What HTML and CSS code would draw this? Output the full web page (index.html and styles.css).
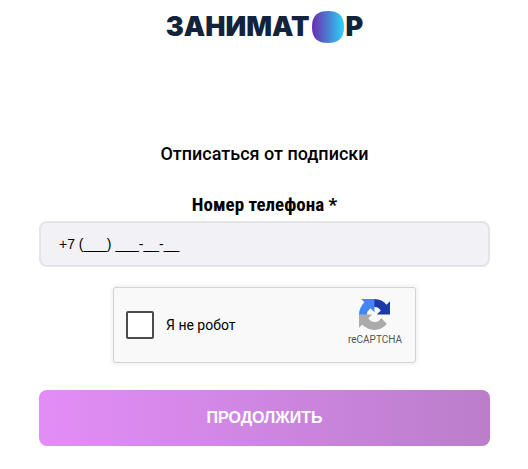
FILE: index.html
```
<!DOCTYPE html>
<html lang="ru">

<head>
  <meta charset="UTF-8">
  <meta name="viewport" content="width=device-width, initial-scale=1.0">
  <title>Заниматор</title>
  <link rel="stylesheet" href="styles.css">
</head>

<body>
  <header class="logo">
    <span>ЗАНИМАТ</span>
    <svg class="logo-o" viewBox="0 0 32 32" aria-hidden="true">
      <defs>
        <linearGradient id="logoFill">
          <stop offset="0" stop-color="#6a2cb0" />
          <stop offset="0.5" stop-color="#4b7fd2" />
          <stop offset="1" stop-color="#2cd5f8" />
        </linearGradient>
      </defs>
      <path d="M16 0C26 0 32 4 32 16S26 32 16 32S0 28 0 16S6 0 16 0Z" fill="url(#logoFill)" />
    </svg>
    <span>Р</span>
  </header>

  <main>
    <h1>Отписаться от подписки</h1>
    <form>
      <label class="phone-label" for="phone">Номер телефона *</label>
      <input class="phone" id="phone" type="tel" value="+7 (___) ___-__-__">

      <div class="captcha">
        <input class="captcha-check" id="robot" type="checkbox">
        <label class="captcha-label" for="robot">Я не робот</label>
        <div class="captcha-brand">
          <svg class="captcha-icon" viewBox="0 0 64 64" aria-hidden="true">
            <path fill="#1c3aa9" d="M64 31.955l-.033-1.37V4.687l-7.16 7.16C50.948 4.674 42.033.093 32.05.093c-10.4 0-19.622 4.96-25.458 12.64l11.736 11.86a15.55 15.55 0 0 1 4.754-5.334c2.05-1.6 4.952-2.906 8.968-2.906.485 0 .86.057 1.135.163 4.976.393 9.288 3.14 11.828 7.124l-8.307 8.307L64 31.953" />
            <path fill="#4285f4" d="M31.862.094l-1.37.033H4.594l7.16 7.16C4.58 13.147 0 22.06 0 32.046c0 10.4 4.96 19.622 12.64 25.458L24.5 45.768a15.55 15.55 0 0 1-5.334-4.754c-1.6-2.05-2.906-4.952-2.906-8.968 0-.485.057-.86.163-1.135.393-4.976 3.14-9.288 7.124-11.828l8.307 8.307L31.86.095" />
            <path fill="#ababab" d="M.001 32.045l.033 1.37v25.898l7.16-7.16c5.86 7.173 14.774 11.754 24.76 11.754 10.4 0 19.622-4.96 25.458-12.64l-11.736-11.86a15.55 15.55 0 0 1-4.754 5.334c-2.05 1.6-4.952 2.906-8.968 2.906-.485 0-.86-.057-1.135-.163-4.976-.393-9.288-3.14-11.828-7.124l8.307-8.307c-10.522.04-22.4.066-27.295-.005" />
          </svg>
          <span>reCAPTCHA</span>
        </div>
      </div>

      <button class="submit" type="submit">ПРОДОЛЖИТЬ</button>
    </form>
  </main>
</body>

</html>
```

FILE: styles.css
```
* {
  box-sizing: border-box;
}

body {
  margin: 0;
  padding: 11px 38px 0 39px;
  background: #fff;
  color: #000;
  font-family: Roboto, "Liberation Sans", sans-serif;
}

.logo {
  display: flex;
  justify-content: center;
  align-items: center;
  gap: 2px;
  color: #12233b;
  font: 900 27px/32px Inter, sans-serif;
}

.logo-o {
  width: 32px;
  height: 32px;
}

h1 {
  margin: 99px 0 0;
  font-size: 18px;
  font-weight: 500;
  line-height: 24px;
  text-align: center;
}

form {
  display: flex;
  flex-direction: column;
  align-items: center;
  margin-top: 27px;
}

.phone-label {
  font-family: "Roboto Condensed", Roboto, sans-serif;
  font-size: 19px;
  font-weight: 700;
  line-height: 24px;
}

.phone {
  width: 100%;
  height: 46px;
  margin-top: 4px;
  padding: 0 18px;
  border: 2px solid #e4e4e7;
  border-radius: 8px;
  background: #f2f1f6;
  color: #000;
  font: 14px "Liberation Sans", sans-serif;
}

.captcha {
  display: flex;
  align-items: center;
  width: 100%;
  max-width: 303px;
  height: 76px;
  margin-top: 20px;
  padding: 0 13px 0 12px;
  border: 1px solid #d3d3d3;
  border-radius: 3px;
  background: #f9f9f9;
  box-shadow: 0 0 4px 1px rgba(0, 0, 0, 0.08);
}

.captcha-check {
  appearance: none;
  width: 28px;
  height: 28px;
  margin: 0 12px 0 0;
  border: 2px solid #4c4a4b;
  border-radius: 2px;
  background: #fff;
}

.captcha-label {
  font-size: 14px;
}

.captcha-brand {
  display: flex;
  flex-direction: column;
  align-items: center;
  gap: 4px;
  margin-left: auto;
  padding-bottom: 6px;
  color: #555;
  font-size: 10px;
  line-height: 12px;
}

.captcha-icon {
  width: 31px;
  height: 31px;
}

.submit {
  width: 100%;
  height: 56px;
  margin-top: 27px;
  border: 0;
  border-radius: 8px;
  background: linear-gradient(90deg, #e28df7, #bb7ecb);
  color: #fff;
  font: 700 16px "Liberation Sans", sans-serif;
}
```
